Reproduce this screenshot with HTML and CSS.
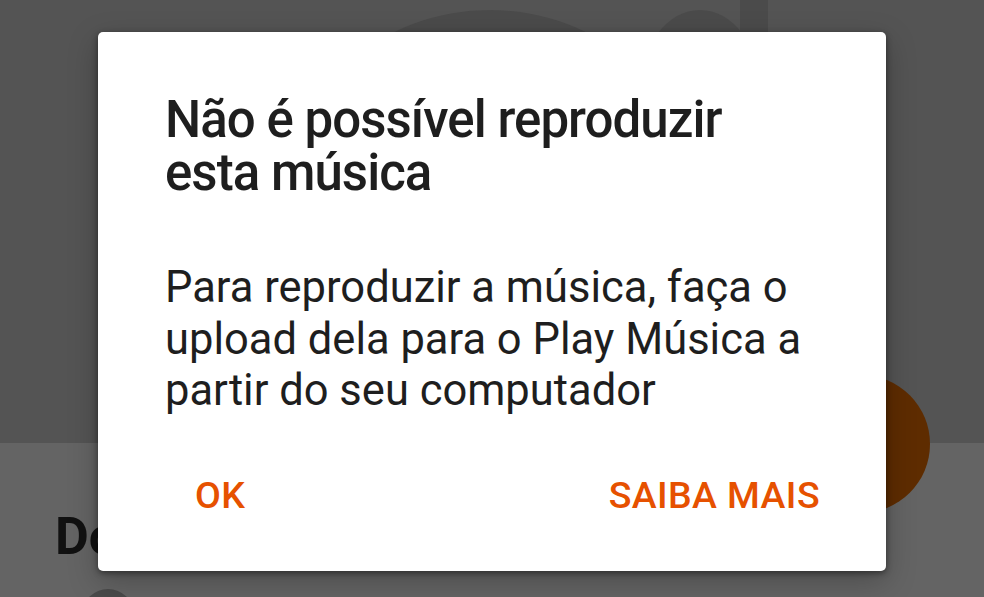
FILE: index.html
```html
<!DOCTYPE html>
<html lang="pt">
<head>
<meta charset="utf-8">
<link rel="stylesheet" href="styles.css">
</head>
<body>
<div class="screen">
  <div class="header">
    <svg class="art" width="984" height="443" viewBox="0 0 984 443">
      <ellipse cx="490" cy="190" rx="200" ry="180" fill="#4b4b4b"/>
      <ellipse cx="700" cy="90" rx="60" ry="80" fill="#4b4b4b"/>
      <rect x="740" y="0" width="28" height="120" fill="#4b4b4b"/>
    </svg>
  </div>
  <div class="content">
    <div class="section-title">Downloads</div>
    <div class="thumb"></div>
  </div>
  <div class="fab"></div>
  <div class="dialog">
    <h1 class="dialog-title">Não é possível reproduzir esta música</h1>
    <p class="dialog-text">Para reproduzir a música, faça o upload dela para o Play Música a partir do seu computador</p>
    <div class="dialog-actions">
      <span class="btn">OK</span>
      <span class="btn">SAIBA MAIS</span>
    </div>
  </div>
</div>
</body>
</html>
```
FILE: styles.css
```css
* { box-sizing: border-box; }
html, body { margin: 0; padding: 0; }
body {
  width: 984px;
  height: 597px;
  overflow: hidden;
  font-family: Roboto, "Noto Sans", sans-serif;
}
.screen {
  position: relative;
  width: 984px;
  height: 597px;
  overflow: hidden;
  display: flex;
  flex-direction: column;
  background: #646464;
}
.header {
  height: 443px;
  flex: none;
  background: #545454;
  overflow: hidden;
}
.art { display: block; }
.content {
  flex: 1;
  padding: 68px 0 0 55px;
  position: relative;
  overflow: hidden;
}
.section-title {
  font-family: Roboto, sans-serif;
  font-weight: 700;
  font-size: 52px;
  line-height: 52px;
  color: #111;
}
.thumb {
  position: absolute;
  left: 82px;
  top: 146px;
  width: 52px;
  height: 52px;
  border-radius: 50%;
  background: #4a4a4a;
}
.fab {
  position: absolute;
  left: 792px;
  top: 375px;
  width: 138px;
  height: 138px;
  border-radius: 50%;
  background: #5e2c00;
}
.dialog {
  position: absolute;
  left: 98px;
  top: 32px;
  width: 788px;
  height: 539px;
  background: #fff;
  border-radius: 5px;
  box-shadow: 0 2px 6px rgba(0,0,0,0.45), 0 10px 30px rgba(0,0,0,0.25);
  padding: 61px 66px 0 67px;
  display: flex;
  flex-direction: column;
}
.dialog-title {
  margin: 0;
  font-weight: 500;
  font-size: 51px;
  line-height: 53px;
  letter-spacing: -0.95px;
  color: #1e1e1e;
}
.dialog-text {
  margin: 63px 0 0;
  font-weight: 400;
  font-size: 43.5px;
  line-height: 51.5px;
  color: #1e1e1e;
}
.dialog-actions {
  margin-top: 56px;
  display: flex;
  justify-content: space-between;
  padding-left: 30px;
}
.btn {
  font-weight: 500;
  font-size: 37.5px;
  line-height: 44px;
  letter-spacing: 0.4px;
  color: #e65100;
}
```
